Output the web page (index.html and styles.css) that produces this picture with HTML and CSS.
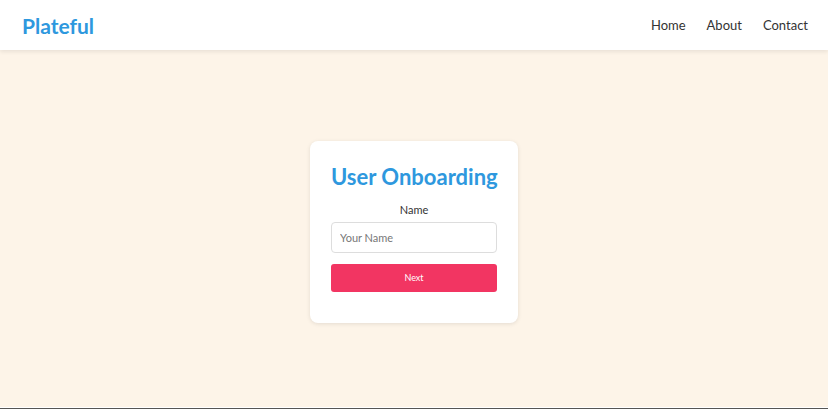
FILE: index.html
```html
<!DOCTYPE html>
<html lang="en">
<head>
  <meta charset="UTF-8" />
  <title>Plateful</title>
  <link rel="stylesheet" href="styles.css">
</head>
<body>
  <header class="navbar">
    <div class="logo">Plateful</div>
    <nav class="nav-links">
      <a href="#">Home</a>
      <a href="#">About</a>
      <a href="#">Contact</a>
    </nav>
  </header>

  <main class="page">
    <div class="card">
      <h1>User Onboarding</h1>
      <form class="onboard-form">
        <label for="name">Name</label>
        <input type="text" id="name" placeholder="Your Name" />
        <button type="button">Next</button>
      </form>
    </div>
  </main>

  <footer class="footer"></footer>
</body>
</html>
```

FILE: styles.css
```css
body {
  margin: 0;
  padding: 0;
  font-family: 'Lato', 'Open Sans', sans-serif;
  background-color: #fdf4e8;
  color: #333;
}
.navbar {
  height: 50px;
  background: white;
  display: flex;
  align-items: center;
  justify-content: space-between;
  padding: 0 20px 0 22px;
  box-shadow: 0 2px 4px rgba(0, 0, 0, 0.08);
  position: relative;
}
.logo {
  font-size: 21px;
  font-weight: 700;
  color: #2e98de;
}
.nav-links {
  display: flex;
  gap: 21px;
}
.nav-links a {
  color: #333;
  text-decoration: none;
  font-size: 13px;
}
.page {
  height: 357px;
  display: flex;
  align-items: center;
  justify-content: center;
  padding-top: 6px;
  box-sizing: border-box;
}
.card {
  width: 208px;
  box-sizing: border-box;
  background: white;
  padding: 22px 21px 31px;
  border-radius: 8px;
  box-shadow: 0 1px 4px rgba(0, 0, 0, 0.1);
  text-align: center;
}
h1 {
  margin: 0 0 13px;
  font-size: 22px;
  color: #2e98de;
  white-space: nowrap;
}
.onboard-form {
  display: flex;
  flex-direction: column;
}
.onboard-form label {
  font-size: 11px;
  color: #333;
  margin-bottom: 6px;
}
.onboard-form input {
  height: 31px;
  box-sizing: border-box;
  border: 1px solid #ddd;
  border-radius: 4px;
  padding: 0 8px;
  font-family: inherit;
  font-size: 11px;
  color: #333;
  margin-bottom: 11px;
}
.onboard-form input::placeholder {
  color: #777;
}
.onboard-form button {
  height: 28px;
  border: none;
  border-radius: 3px;
  background-color: #f23562;
  color: white;
  font-family: inherit;
  font-size: 9px;
  cursor: pointer;
}
.footer {
  border-top: 1px solid #fff;
  background: #555;
  height: 40px;
}
```
